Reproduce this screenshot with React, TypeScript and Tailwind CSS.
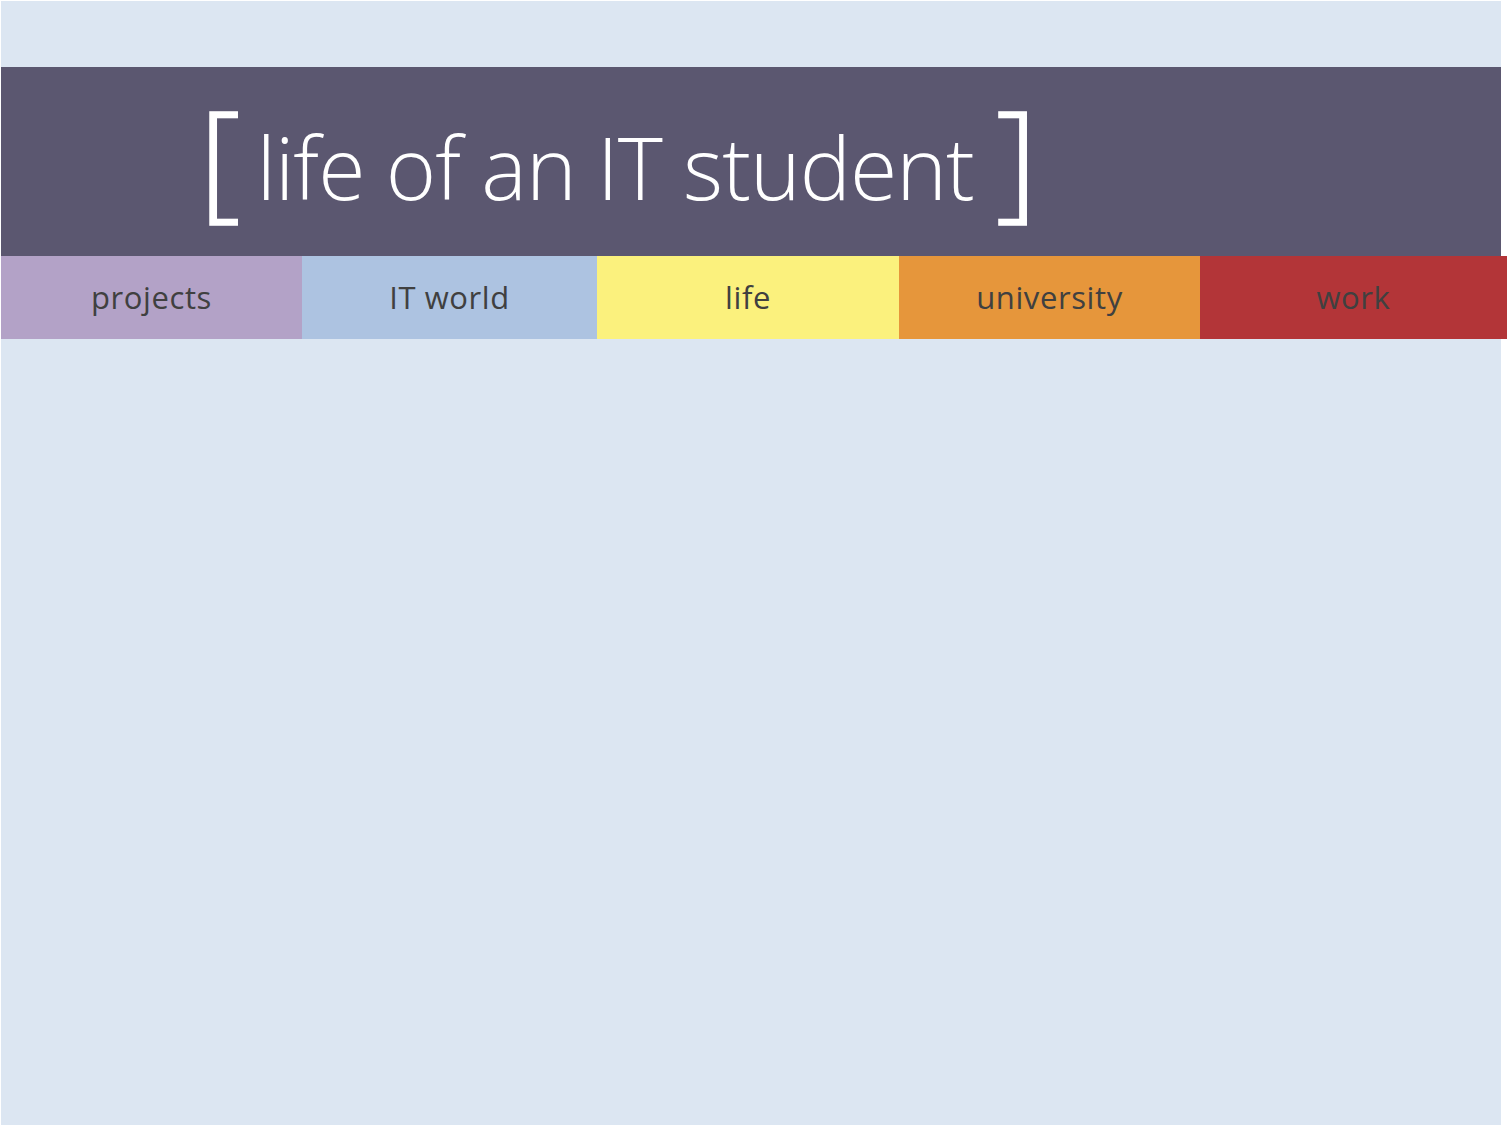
const tabs = [
  { label: "projects", cls: "w-[301px] bg-[#b3a2c7]" },
  { label: "IT world", cls: "w-[295px] bg-[#adc3e1]" },
  { label: "life", cls: "w-[302px] bg-[#fbf17d]" },
  { label: "university", cls: "w-[301px] bg-[#e6963b]" },
  { label: "work", cls: "w-[307px] bg-[#b33538]" },
]

export default function App() {
  return (
    <div className="h-[1127px] w-[1508px] overflow-hidden bg-white pl-px pt-px" style={{ fontFamily: '"Open Sans", "Noto Sans", sans-serif' }}>
      <div className="h-[1124px] w-[1500px] bg-[#dce6f2] pt-[66px]">
        {/* title band */}
        <header className="flex h-[189px] w-[1500px] items-center bg-[#5b5770] pl-[198px] text-white">
          <span className="mt-[-14px] text-[130px] font-light leading-none [-webkit-text-stroke:1.5px_white]">[</span>
          <h1 className="ml-[16px] mt-[10px] text-[86px] font-light leading-none tracking-[-1px]">life of an IT student</h1>
          <span className="ml-[22px] mt-[-14px] text-[130px] font-light leading-none [-webkit-text-stroke:1.5px_white]">]</span>
        </header>

        {/* nav */}
        <nav className="flex h-[83px] w-[1506px]">
          {tabs.map((t) => (
            <div key={t.label} className={`flex items-center justify-center text-[31px] tracking-[0.6px] text-[#404040] ${t.cls}`}>
              {t.label}
            </div>
          ))}
        </nav>
      </div>
    </div>
  )
}
